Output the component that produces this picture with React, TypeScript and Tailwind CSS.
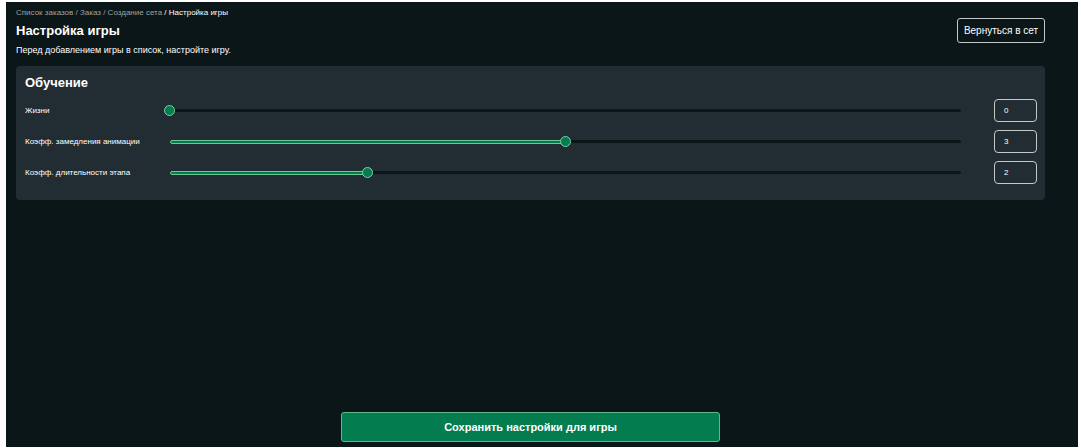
import React, { useState } from 'react'

const crumbs = ['Список заказов', 'Заказ', 'Создание сета']

const settings = [
    { id: 'lives', label: 'Жизни', min: 0, max: 5, initial: 0 },
    { id: 'slowdown', label: 'Коэфф. замедления анимации', min: 1, max: 5, initial: 3 },
    { id: 'duration', label: 'Коэфф. длительности этапа', min: 1, max: 5, initial: 2 }
]

type SettingRowProps = {
    id: string
    label: string
    min: number
    max: number
    initial: number
}

const SettingRow = ({ id, label, min, max, initial }: SettingRowProps) => {
    const [value, setValue] = useState(initial)
    const percent = ((value - min) / (max - min)) * 100

    return (
        <div className="flex items-center">
            <label htmlFor={id} className="w-[145px] shrink-0 text-[8px] leading-3">{label}</label>
            <div className="relative flex-1 h-[11px] flex items-center">
                <div className="w-full h-[3px] rounded-full bg-[#0a1517]">
                    {percent > 0 && (
                        <div
                            className="h-[4px] rounded-full bg-[#037c50] border border-[#6fc793]"
                            style={{ width: `${percent}%` }}
                        />
                    )}
                </div>
                {/* wider than the track by half a thumb on each side */}
                <input
                    id={id}
                    type="range"
                    min={min}
                    max={max}
                    value={value}
                    onChange={(e) => setValue(Number(e.target.value))}
                    className="absolute inset-y-0 -left-[6px] w-[calc(100%+11px)] h-[11px] appearance-none bg-transparent cursor-pointer [&::-webkit-slider-thumb]:appearance-none [&::-webkit-slider-thumb]:size-[11px] [&::-webkit-slider-thumb]:rounded-full [&::-webkit-slider-thumb]:border [&::-webkit-slider-thumb]:border-[#7fcfa0] [&::-webkit-slider-thumb]:bg-[#037c50]"
                />
            </div>
            <input
                type="text"
                inputMode="numeric"
                aria-label={label}
                value={value}
                onChange={(e) => setValue(Math.min(max, Math.max(min, Number(e.target.value) || min)))}
                className="ml-[33px] w-[43px] h-[23px] shrink-0 rounded border border-[#c3c8c9] bg-transparent px-[9px] text-[8px]"
            />
        </div>
    )
}

const App = () => {
    return (
        <div className="min-h-screen flex flex-col bg-white pt-[2px] pr-[3px] pb-px pl-[6px] font-['Liberation_Sans',Arial,sans-serif] text-white">
            <main className="flex-1 flex flex-col bg-[#0b1618] pt-[5px] pr-[33px] pb-[5px] pl-[10px]">
                <header className="flex items-start justify-between">
                    <div>
                        <nav className="text-[8px] leading-3 text-[#9da2a3]">
                            {crumbs.map((crumb) => (
                                <React.Fragment key={crumb}>
                                    <a href="#">{crumb}</a>
                                    {crumb === 'Создание сета' ? <span className="text-white"> / </span> : ' / '}
                                </React.Fragment>
                            ))}
                            <span className="text-white" aria-current="page">Настройка игры</span>
                        </nav>
                        <h1 className="mt-1 text-[13px] leading-4 font-bold">Настройка игры</h1>
                        <p className="mt-[3px] text-[9px] leading-4">Перед добавлением игры в список, настройте игру.</p>
                    </div>
                    <button type="button" className="mt-[11px] h-[25px] min-w-[88px] px-1 rounded-[3px] border border-[#c3c8c9] text-[10px] whitespace-nowrap">
                        Вернуться в сет
                    </button>
                </header>

                <section className="mt-2 rounded bg-[#212d32] pt-[9px] pr-2 pb-4 pl-[9px]">
                    <h2 className="text-[13px] leading-4 font-bold">Обучение</h2>
                    <div className="mt-2 flex flex-col gap-2">
                        {settings.map((setting) => (
                            <SettingRow key={setting.id} {...setting} />
                        ))}
                    </div>
                </section>

                <button type="button" className="mt-auto mx-auto w-full max-w-[379px] h-[30px] rounded-[3px] border border-[#5fb98a] bg-[#037c50] text-[11px] font-bold">
                    Сохранить настройки для игры
                </button>
            </main>
        </div>
    )
}

export default App
